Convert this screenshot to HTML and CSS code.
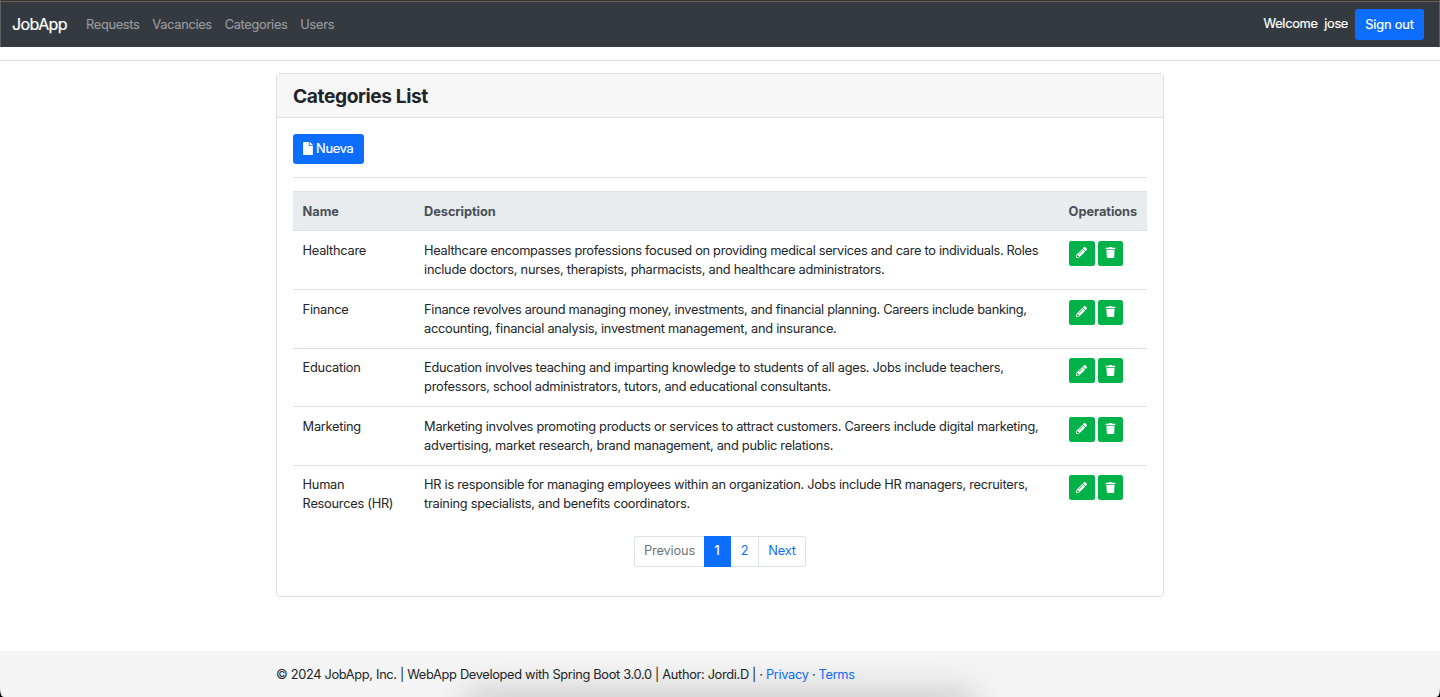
FILE: index.html
```html
<!DOCTYPE html>
<html lang="en">
<head>
<meta charset="utf-8">
<title>JobApp</title>
<link rel="stylesheet" href="styles.css">
</head>
<body>
<svg class="sprite" aria-hidden="true">
  <symbol id="file" viewBox="0 0 384 512"><path d="M224 136V0H24C10.700 0 0 10.700 0 24v464c0 13.300 10.700 24 24 24h336c13.300 0 24-10.700 24-24V160H248c-13.200 0-24-10.800-24-24zm160-14.100v6.100H256V0h6.100c6.400 0 12.500 2.500 17 7l97.900 98c4.500 4.500 7 10.600 7 16.900z"/></symbol>
  <symbol id="pencil" viewBox="0 0 512 512"><path d="M497.900 142.100l-46.100 46.100c-4.700 4.700-12.300 4.700-17 0l-111-111c-4.700-4.700-4.700-12.300 0-17l46.100-46.100c18.700-18.700 49.100-18.700 67.900 0l60.100 60.100c18.800 18.700 18.800 49.100 0 67.900zM284.200 99.800L21.600 362.400.4 483.900c-2.900 16.400 11.400 30.600 27.800 27.800l121.500-21.300 262.600-262.600c4.700-4.700 4.700-12.300 0-17l-111-111c-4.800-4.700-12.400-4.700-17.100 0zM124.100 339.900c-5.500-5.500-5.500-14.300 0-19.800l154-154c5.500-5.500 14.300-5.500 19.800 0s5.500 14.300 0 19.800l-154 154c-5.500 5.500-14.300 5.500-19.800 0zM88 424h48v36.300l-64.500 11.300-31.100-31.100L51.700 376H88v48z"/></symbol>
  <symbol id="trash" viewBox="0 0 448 512"><path d="M432 32H312l-9.400-18.700A24 24 0 0 0 281.100 0H166.800a23.700 23.700 0 0 0-21.400 13.300L136 32H16A16 16 0 0 0 0 48v32a16 16 0 0 0 16 16h416a16 16 0 0 0 16-16V48a16 16 0 0 0-16-16zM53.200 467a48 48 0 0 0 47.900 45h245.800a48 48 0 0 0 47.900-45L416 128H32z"/></symbol>
</svg>
<header class="navbar">
  <a class="brand">JobApp</a>
  <nav class="nav"><a>Requests</a><a>Vacancies</a><a>Categories</a><a>Users</a></nav>
  <span class="welcome">Welcome&nbsp; jose</span>
  <a class="btn signout">Sign out</a>
</header>
<hr class="rule">
<main class="card">
  <div class="card-header"><h1>Categories List</h1></div>
  <div class="card-body">
    <a class="btn new"><svg class="icon-file"><use href="#file"/></svg><span>Nueva</span></a>
    <hr class="divider">
    <table class="table">
      <thead><tr><th class="c-name">Name</th><th class="c-desc">Description</th><th class="c-ops">Operations</th></tr></thead>
      <tbody>
        <tr><td>Healthcare</td><td class="desc tight">Healthcare encompasses professions focused on providing medical services and care to individuals. Roles<br>include doctors, nurses, therapists, pharmacists, and healthcare administrators.</td><td><div class="ops"><a class="op"><svg><use href="#pencil"/></svg></a><a class="op trash"><svg><use href="#trash"/></svg></a></div></td></tr>
        <tr><td>Finance</td><td class="desc tight">Finance revolves around managing money, investments, and financial planning. Careers include banking,<br>accounting, financial analysis, investment management, and insurance.</td><td><div class="ops"><a class="op"><svg><use href="#pencil"/></svg></a><a class="op trash"><svg><use href="#trash"/></svg></a></div></td></tr>
        <tr><td>Education</td><td class="desc">Education involves teaching and imparting knowledge to students of all ages. Jobs include teachers,<br>professors, school administrators, tutors, and educational consultants.</td><td><div class="ops"><a class="op"><svg><use href="#pencil"/></svg></a><a class="op trash"><svg><use href="#trash"/></svg></a></div></td></tr>
        <tr><td>Marketing</td><td>Marketing involves promoting products or services to attract customers. Careers include digital marketing,<br>advertising, market research, brand management, and public relations.</td><td><div class="ops"><a class="op"><svg><use href="#pencil"/></svg></a><a class="op trash"><svg><use href="#trash"/></svg></a></div></td></tr>
        <tr><td>Human<br>Resources (HR)</td><td class="desc">HR is responsible for managing employees within an organization. Jobs include HR managers, recruiters,<br>training specialists, and benefits coordinators.</td><td><div class="ops"><a class="op"><svg><use href="#pencil"/></svg></a><a class="op trash"><svg><use href="#trash"/></svg></a></div></td></tr>
      </tbody>
    </table>
    <nav class="pagination"><a class="prev">Previous</a><a class="active">1</a><a class="two">2</a><a class="next">Next</a></nav>
  </div>
</main>
<footer class="footer">
  <p>© 2024 JobApp, Inc. | WebApp Developed with Spring Boot 3.0.0 | Author: Jordi.D | · <a>Privacy</a> · <a>Terms</a></p>
  <div class="shade"></div>
  <svg class="corner left" viewBox="0 0 10 10" preserveAspectRatio="none"><path d="M0 0Q0 10 10 10H0z"/></svg>
  <svg class="corner right" viewBox="0 0 10 10" preserveAspectRatio="none"><path d="M10 0Q10 10 0 10H10z"/></svg>
</footer>
</body>
</html>
```
FILE: styles.css
```css
* { box-sizing: border-box; }
body {
  margin: 0;
  height: 697px;
  display: flex;
  flex-direction: column;
  overflow: hidden;
  background: #fff;
  color: #212529;
  font: 12.8px/19.2px Inter, "Liberation Sans", sans-serif;
  letter-spacing: -0.26px;
}
.sprite { display: none; }
svg { fill: currentColor; display: block; }
.navbar {
  flex: none;
  height: 47px;
  display: flex;
  align-items: center;
  padding: 2px 15px 0 11px;
  background: #343a40;
  border: 1px solid #5d6063;
  border-top: 0;
  border-bottom: 0;
  box-shadow: inset 0 1px #343330, inset 0 2px #66625f;
  color: #fff;
}
.brand { font-size: 16px; width: 74px; letter-spacing: -0.6px; -webkit-text-stroke: .2px; }
.nav { display: flex; gap: 12.8px; color: #999c9f; letter-spacing: -0.3px; -webkit-text-stroke: .15px; }
.welcome { margin-left: auto; margin-right: 7px; padding-bottom: 2px; letter-spacing: -0.3px; -webkit-text-stroke: .2px; }
.btn {
  display: inline-flex;
  align-items: center;
  background: #0d6efd;
  color: #fff;
  border-radius: 3.2px;
  -webkit-text-stroke: .2px;
}
.signout { width: 69px; height: 31px; justify-content: center; letter-spacing: -0.15px; }
.rule { flex: none; width: 100%; height: 1px; margin: 13px 0 12px; border: 0; background: #e1e1e1; }
.card {
  flex: none;
  width: 888px;
  height: 524px;
  margin: 0 auto;
  border: 1px solid #dfdfdf;
  border-radius: 3.2px;
}
.card-header { height: 44px; padding: 0 16px; background: #f7f7f7; border-bottom: 1px solid #dfdfdf; }
h1 { margin: 0; font-size: 19.2px; line-height: 45px; font-weight: 700; letter-spacing: -0.42px; }
.card-body { padding: 16px 16px 0; }
.new { width: 71px; height: 30px; padding-left: 10px; gap: 3px; vertical-align: top; }
.icon-file { width: 10px; height: 13px; }
.new svg { margin-top: -1px; }
.divider { height: 1px; margin: 13px 0; border: 0; background: #e1e1e1; }
.table { width: 854px; border-collapse: separate; border-spacing: 0; table-layout: fixed; }
th, td {
  padding: 9.6px;
  text-align: left;
  vertical-align: top;
  white-space: nowrap;
  border-top: 1px solid #dee2e6;
}
td { line-height: 19.1px; padding-bottom: 9.76px; }
th {
  background: #e9ecef;
  color: #495057;
  font-weight: 700;
  letter-spacing: -0.07px;
  border-bottom: 1px solid #dee2e6;
}
tbody tr:first-child td { border-top: 0; padding-bottom: 9.8px; }
.desc::first-line { letter-spacing: -0.28px; }
.tight::first-line { letter-spacing: -0.3px; }
.c-name { width: 121.500px; }
.c-ops { width: 88px; }
.ops { display: flex; gap: 3px; }
.op {
  width: 26px;
  height: 25px;
  display: flex;
  align-items: center;
  justify-content: center;
  background: #00b248;
  color: #fff;
  border-radius: 2.500px;
}
.op.trash { width: 25px; }
.op svg { width: 11px; height: 11px; margin-top: -1px; }
.pagination { display: flex; justify-content: center; margin-top: 13px; color: #0d6efd; letter-spacing: -0.16px; }
.pagination a {
  height: 31px;
  display: flex;
  align-items: center;
  justify-content: center;
  padding-bottom: 2px;
  border: 1px solid #dee2e6;
  border-left: 0;
}
.pagination .prev { width: 70px; border-left: 1px solid #dee2e6; border-right: 0; border-radius: 3px 0 0 3px; color: #6c757d; }
.pagination .active { width: 27px; background: #0d6efd; border-color: #0d6efd; color: #fff; -webkit-text-stroke: .2px; }
.pagination .two { width: 28px; }
.pagination .next { width: 47px; border-radius: 0 3px 3px 0; }
.footer { position: relative; flex: none; height: 46px; margin-top: auto; overflow: hidden; background: #f4f4f4; }
.footer p { width: 888px; margin: 0 auto; padding-top: 14px; letter-spacing: -0.32px; }
.footer a { color: #0d6efd; }
.shade {
  position: absolute;
  left: 475px;
  top: 50px;
  width: 490px;
  height: 20px;
  box-shadow: 0 0 36px 8px rgba(0, 0, 0, .2);
}
.corner { position: absolute; bottom: 0; width: 4px; height: 9px; fill: #000; }
.left { left: 0; }
.right { right: 0; }
```
